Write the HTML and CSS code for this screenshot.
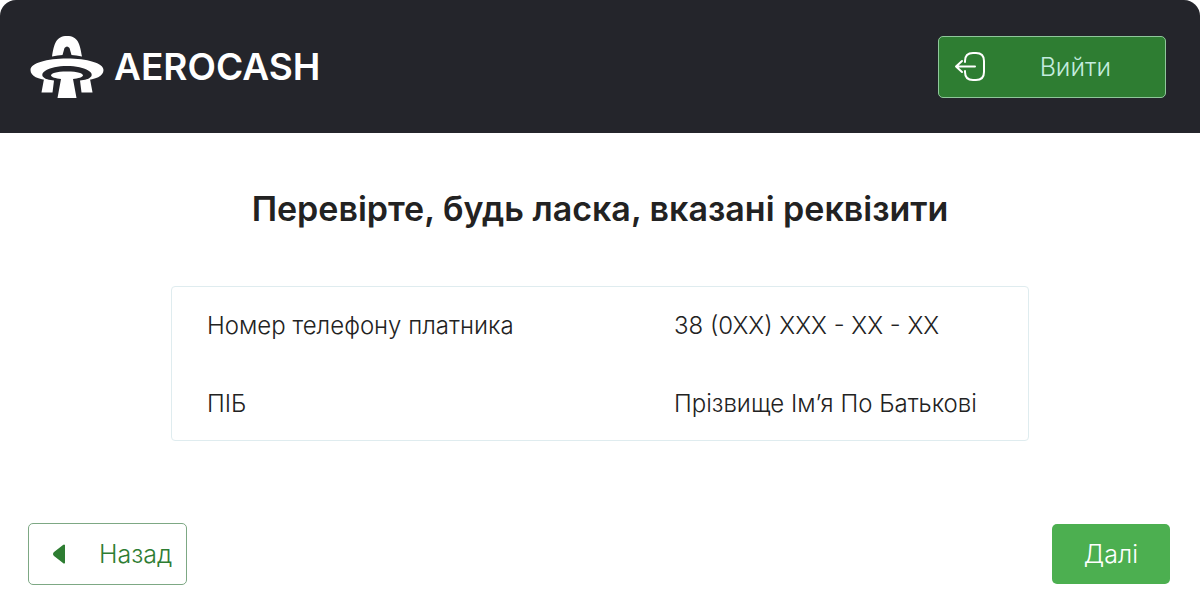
FILE: index.html
```
<!DOCTYPE html>
<html lang="uk">
<head>
  <meta charset="UTF-8">
  <meta name="viewport" content="width=device-width, initial-scale=1">
  <title>AEROCASH</title>
  <link rel="stylesheet" href="styles.css">
</head>
<body>
  <header class="header">
    <a class="logo" href="#">
      <svg class="logo-icon" viewBox="0 0 74 64" aria-hidden="true">
        <g fill="#fff">
          <path d="M22 21.500 C24 9 26 1 37 1 S50 9 52 21.500 Q46 20 41.500 20 L39.500 13 Q37 10 34.500 13 L32.500 20 Q28 20 22 21.500Z"/>
          <path fill-rule="evenodd" d="M37 23.500 C57 23.500 73.500 28 73.500 35 C73.500 41 66 44.500 54 45.500 C62 43 64 39.500 59 36 C54 32.500 46 31 37 31 S20 32.500 15 36 C10 39.500 12 43 20 45.500 C8 44.500 .500 41 .500 35 C.500 28 17 23.500 37 23.500Z"/>
          <path d="M37 36.500 C48 36.500 53 38.500 53 40.500 C53 42 48 43.500 43 44 L46.500 63 H27.500 L31 44 C26 43.500 21 42 21 40.500 C21 38.500 26 36.500 37 36.500Z"/>
          <path d="M14 44 L24 45.500 L22.500 57.500 H11.500Z"/>
          <path d="M60 44 L50 45.500 L51.500 57.500 H62.500Z"/>
        </g>
      </svg>
      <span>AEROCASH</span>
    </a>
    <button class="btn btn-exit" type="button">
      <svg class="exit-icon" viewBox="0 0 32 32" aria-hidden="true">
        <path d="M10 11 V10 Q10 2 18 2 H21 Q29 2 29 10 V21 Q29 29 21 29 H18 Q10 29 10 21 V20 M20 15.500 H1 M7 10 L1 15.500 L7 21" fill="none" stroke="#fff" stroke-width="2" stroke-linecap="round" stroke-linejoin="round"/>
      </svg>
      <span>Вийти</span>
    </button>
  </header>

  <main class="content">
    <h1>Перевірте, будь ласка, вказані реквізити</h1>
    <div class="details">
      <table>
        <tbody>
          <tr>
            <th scope="row">Номер телефону платника</th>
            <td>38 (0XX) XXX - XX - XX</td>
          </tr>
          <tr>
            <th scope="row">ПІБ</th>
            <td>Прізвище Ім’я По Батькові</td>
          </tr>
        </tbody>
      </table>
    </div>
  </main>

  <div class="actions">
    <button class="btn btn-back" type="button">
      <svg class="back-icon" viewBox="0 0 12 20" aria-hidden="true">
        <path d="M12 1 V19 Q11 20 10 19 L1 12 Q-1 10 1 8 L10 1 Q11 0 12 1Z" fill="#2e7d32"/>
      </svg>
      <span>Назад</span>
    </button>
    <button class="btn btn-next" type="button">Далі</button>
  </div>
</body>
</html>
```

FILE: styles.css
```
* {
  box-sizing: border-box;
  margin: 0;
  padding: 0;
}
body {
  display: flex;
  flex-direction: column;
  min-height: 100vh;
  background-color: #fff;
  color: #222;
  font-family: Inter, "Open Sans", sans-serif;
  font-size: 24px;
  font-weight: 300;
}
.header {
  display: flex;
  align-items: center;
  justify-content: space-between;
  padding: 35px 34px 34px 30px;
  background-color: #24252b;
  border-radius: 16px 16px 0 0;
}
.logo {
  display: flex;
  align-items: center;
  gap: 10px;
  color: #fff;
  font-size: 37px;
  font-weight: 600;
  line-height: 60px;
  text-decoration: none;
}
.logo-icon {
  width: 74px;
  height: 64px;
}
.btn {
  display: flex;
  align-items: center;
  border: 1px solid transparent;
  border-radius: 5px;
  cursor: pointer;
  font: inherit;
  font-size: 25px;
  line-height: 30px;
}
.btn-exit {
  gap: 52px;
  padding: 14px 54px 14px 15px;
  background-color: #2e7d32;
  border-color: #8fc79b;
  color: #c3ecdf;
}
.exit-icon {
  width: 34px;
  height: 32px;
}
.content {
  padding: 54px 24px 24px;
}
h1 {
  font-size: 34px;
  font-weight: 600;
  line-height: 44px;
  text-align: center;
}
.details {
  max-width: 858px;
  margin: 55px auto 0;
  border: 1px solid #dfecef;
  border-radius: 4px;
}
table {
  width: 100%;
  border-collapse: collapse;
}
th, td {
  padding: 25px 0 25px 35px;
  font-weight: 300;
  line-height: 28px;
  text-align: left;
}
th {
  width: 467px;
}
tr:last-child th, tr:last-child td {
  padding-bottom: 22px;
}
.actions {
  display: flex;
  align-items: center;
  justify-content: space-between;
  margin-top: auto;
  padding: 0 30px 29px 28px;
}
.btn-back {
  gap: 34px;
  padding: 15px 14px 15px 24px;
  background-color: #fff;
  border-color: #7da884;
  color: #2e7d32;
}
.back-icon {
  width: 12px;
  height: 20px;
}
.btn-next {
  padding: 14px 31px;
  background-color: #4caf50;
  color: #fff;
}
```
